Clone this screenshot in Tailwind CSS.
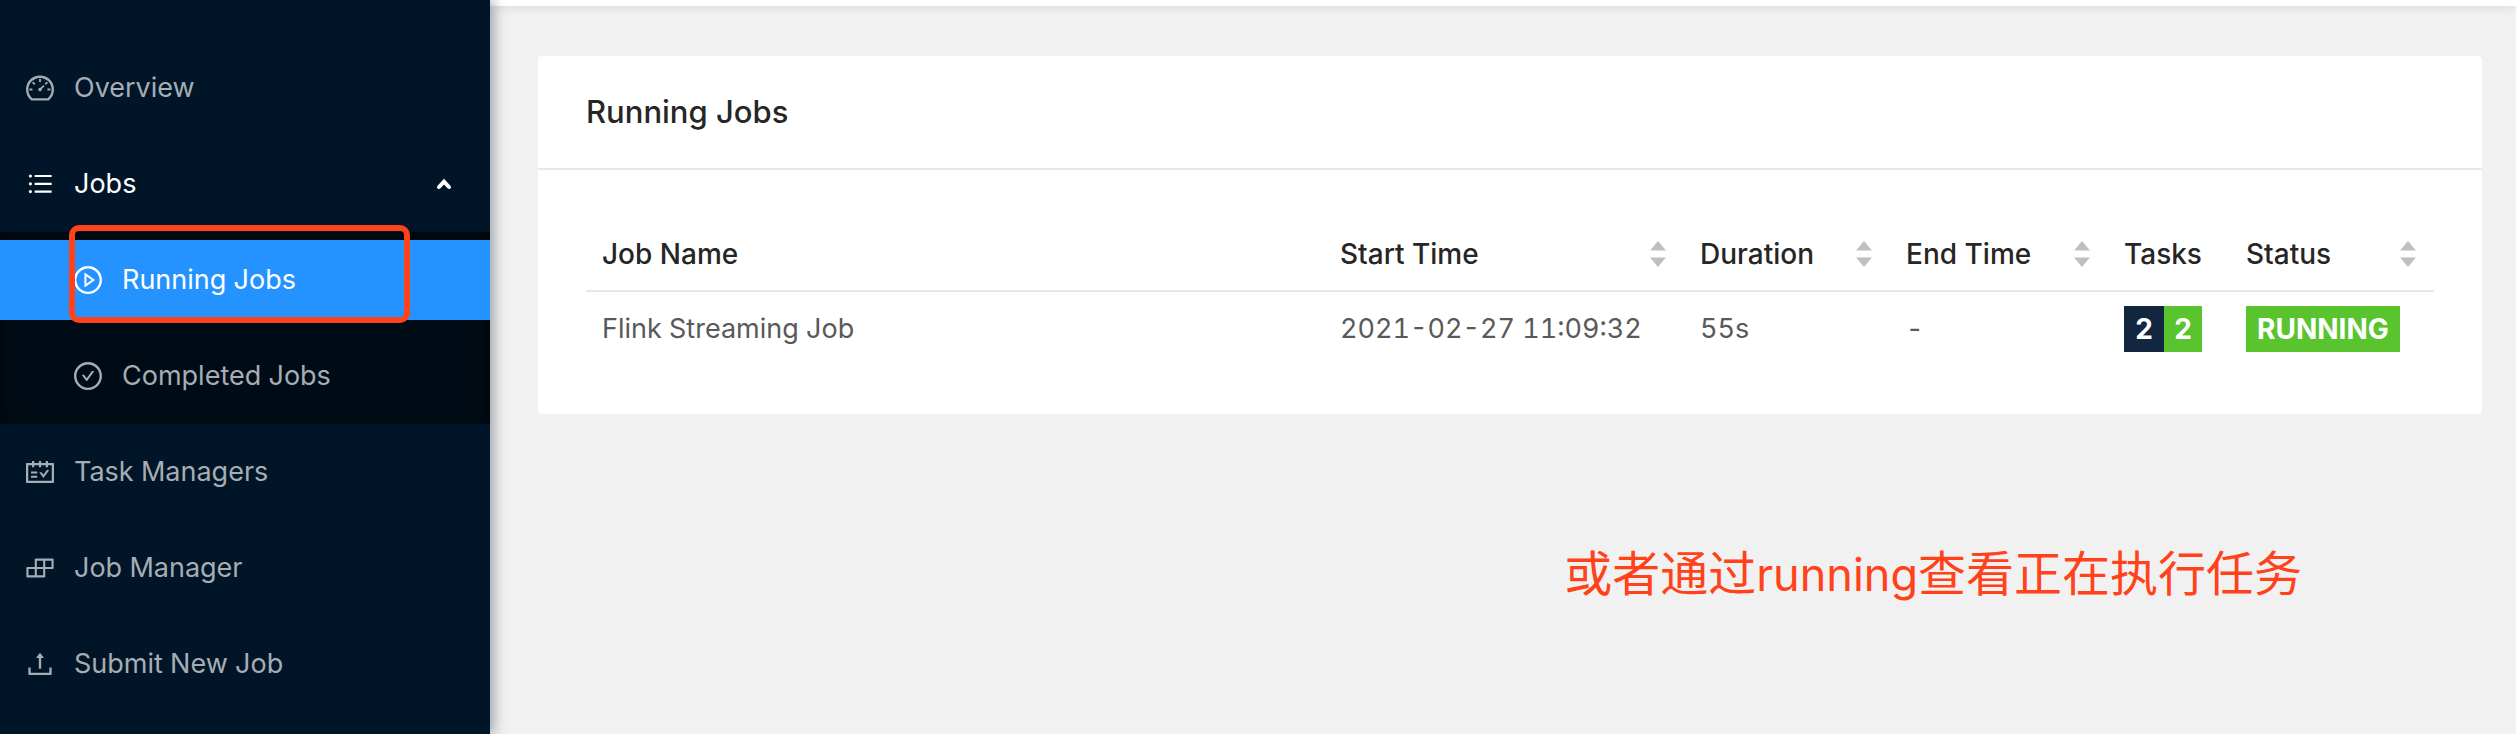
<!DOCTYPE html>
<html lang="en">
<head>
<meta charset="utf-8">
<title>Running Jobs</title>
<script src="https://cdn.jsdelivr.net/npm/@tailwindcss/browser@4"></script>
</head>
<body class="bg-[#f1f1f1] font-['Inter','Noto_Sans_CJK_SC',sans-serif] text-[27px] leading-[42px] text-[#595959] tabular-nums">
<svg class="hidden" aria-hidden="true">
  <symbol id="sorter" viewBox="0 0 16 26"><path d="M8 0L16 9.5H0zM8 26L16 16.5H0z"/></symbol>
</svg>
<div class="flex min-h-screen">
  <aside class="relative z-10 w-[490px] shrink-0 bg-[#001528] text-[#a6adb4] shadow-[4px_0_12px_rgba(0,21,41,0.35)]">
    <nav class="pt-12">
      <a href="#" class="flex h-20 items-center gap-[18px] px-6">
        <svg class="size-8 shrink-0" viewBox="0 0 1024 1024" fill="currentColor" aria-hidden="true"><path d="M924.8 385.6a446.7 446.7 0 0 0-96-142.4 446.7 446.7 0 0 0-142.4-96C631.1 123.8 572.5 112 512 112s-119.1 11.8-174.4 35.2a446.7 446.7 0 0 0-142.4 96 446.7 446.7 0 0 0-96 142.4C75.8 440.9 64 499.5 64 560c0 132.7 58.3 257.7 159.9 343.1l1.7 1.4c5.8 4.8 13.1 7.5 20.6 7.5h531.7c7.5 0 14.8-2.7 20.6-7.5l1.7-1.4C901.7 817.7 960 692.7 960 560c0-60.5-11.9-119.1-35.2-174.4zM761.4 836H262.6A371.12 371.12 0 0 1 140 560c0-99.4 38.7-192.8 109-263 70.3-70.3 163.7-109 263-109 99.4 0 192.8 38.7 263 109 70.3 70.3 109 163.7 109 263 0 105.6-44.5 205.5-122.6 276zM623.5 421.5a8.03 8.03 0 0 0-11.3 0L527.7 506c-18.7-5-39.4-.2-54.1 14.5a55.95 55.95 0 0 0 0 79.2 55.95 55.95 0 0 0 79.2 0 55.87 55.87 0 0 0 14.5-54.1l84.5-84.5c3.1-3.1 3.1-8.2 0-11.3l-28.3-28.3zM490 320h44c4.4 0 8-3.6 8-8v-80c0-4.4-3.6-8-8-8h-44c-4.4 0-8 3.6-8 8v80c0 4.4 3.6 8 8 8zm260 218v44c0 4.4 3.6 8 8 8h80c4.4 0 8-3.6 8-8v-44c0-4.4-3.6-8-8-8h-80c-4.4 0-8 3.6-8 8zm12.7-197.2l-31.1-31.1a8.03 8.03 0 0 0-11.3 0l-56.6 56.6a8.03 8.03 0 0 0 0 11.3l31.1 31.1c3.1 3.1 8.2 3.1 11.3 0l56.6-56.6c3.1-3.1 3.1-8.2 0-11.3zm-458.6-31.1a8.03 8.03 0 0 0-11.3 0l-31.1 31.1a8.03 8.03 0 0 0 0 11.3l56.6 56.6c3.1 3.1 8.2 3.1 11.3 0l31.1-31.1c3.1-3.1 3.1-8.2 0-11.3l-56.6-56.6zM262 530h-80c-4.4 0-8 3.6-8 8v44c0 4.4 3.6 8 8 8h80c4.4 0 8-3.6 8-8v-44c0-4.4-3.6-8-8-8z"/></svg>
        <span>Overview</span>
      </a>
      <button type="button" aria-expanded="true" class="mt-4 mb-2 flex h-20 w-full items-center gap-[18px] px-6 text-left text-white">
        <svg class="size-8 shrink-0" viewBox="0 0 32 32" fill="currentColor" aria-hidden="true"><circle cx="6.4" cy="8" r="1.6"/><circle cx="6.4" cy="15.8" r="1.6"/><circle cx="6.4" cy="23.6" r="1.6"/><path d="M10.6 6.9h17v2.2h-17zM10.6 14.7h17v2.2h-17zM10.6 22.5h17v2.2h-17z"/></svg>
        <span class="grow">Jobs</span>
        <svg class="mr-3 size-5 shrink-0" viewBox="0 0 20 20" fill="none" stroke="currentColor" stroke-width="4" stroke-linecap="round" aria-hidden="true"><path d="M5 13L10 7.7L15 13"/></svg>
      </button>
      <div class="bg-[#000c15] py-2 shadow-[inset_0_4px_16px_rgba(0,0,0,0.45)]">
        <a href="#" aria-current="page" class="relative flex h-20 items-center gap-[18px] bg-[#2492ff] pr-6 pl-18 text-white">
          <svg class="size-8 shrink-0" viewBox="0 0 1024 1024" fill="currentColor" aria-hidden="true"><path d="M512 64C264.6 64 64 264.6 64 512s200.6 448 448 448 448-200.6 448-448S759.4 64 512 64zm0 820c-205.4 0-372-166.6-372-372s166.6-372 372-372 372 166.6 372 372-166.6 372-372 372z"/><path d="M719.4 499.1l-296.1-215A15.9 15.9 0 0 0 398 297v430c0 13.1 14.8 20.5 25.3 12.9l296.1-215a15.9 15.9 0 0 0 0-25.8zm-257.6 134V390.9L628.5 512 461.8 633.1z"/></svg>
          <span>Running Jobs</span>
          <span class="absolute -top-[15px] -bottom-[3px] left-[69px] w-[341px] rounded-[10px] border-6 border-[#ff421a]" aria-hidden="true"></span>
        </a>
        <a href="#" class="mt-4 flex h-20 items-center gap-[18px] pr-6 pl-18">
          <svg class="size-8 shrink-0" viewBox="0 0 1024 1024" fill="currentColor" aria-hidden="true"><path d="M699 353h-46.9c-10.2 0-19.9 4.9-25.9 13.3L469 584.3l-71.2-98.8c-6-8.3-15.6-13.3-25.9-13.3H325c-6.5 0-10.3 7.4-6.5 12.7l124.6 172.8a31.8 31.8 0 0 0 51.7 0l210.6-292c3.9-5.3.1-12.7-6.4-12.7z"/><path d="M512 64C264.6 64 64 264.6 64 512s200.6 448 448 448 448-200.6 448-448S759.4 64 512 64zm0 820c-205.4 0-372-166.6-372-372s166.6-372 372-372 372 166.6 372 372-166.6 372-372 372z"/></svg>
          <span>Completed Jobs</span>
        </a>
      </div>
      <a href="#" class="mt-2 flex h-20 items-center gap-[18px] px-6">
        <svg class="size-8 shrink-0" viewBox="0 0 1024 1024" fill="currentColor" aria-hidden="true"><path d="M928 224H768v-56c0-4.4-3.6-8-8-8h-56c-4.4 0-8 3.6-8 8v56H548v-56c0-4.4-3.6-8-8-8h-56c-4.4 0-8 3.6-8 8v56H328v-56c0-4.4-3.6-8-8-8h-56c-4.4 0-8 3.6-8 8v56H96c-17.7 0-32 14.3-32 32v576c0 17.7 14.3 32 32 32h832c17.7 0 32-14.3 32-32V256c0-17.7-14.3-32-32-32zm-40 568H136V296h120v56c0 4.4 3.6 8 8 8h56c4.4 0 8-3.6 8-8v-56h148v56c0 4.4 3.6 8 8 8h56c4.4 0 8-3.6 8-8v-56h148v56c0 4.4 3.6 8 8 8h56c4.4 0 8-3.6 8-8v-56h120v496zM416 496H232c-4.4 0-8 3.6-8 8v48c0 4.4 3.6 8 8 8h184c4.4 0 8-3.6 8-8v-48c0-4.4-3.6-8-8-8zm0 136H232c-4.4 0-8 3.6-8 8v48c0 4.4 3.6 8 8 8h184c4.4 0 8-3.6 8-8v-48c0-4.4-3.6-8-8-8zm308.2-177.4L620.6 598.3l-52.8-73.1c-3-4.2-7.8-6.6-12.9-6.6H500c-6.5 0-10.3 7.4-6.5 12.7l114.1 158.2a15.9 15.9 0 0 0 25.8 0l165-228.7c3.8-5.3 0-12.7-6.5-12.7H737c-5-.1-9.8 2.4-12.8 6.5z"/></svg>
        <span>Task Managers</span>
      </a>
      <a href="#" class="mt-4 flex h-20 items-center gap-[18px] px-6">
        <svg class="size-8 shrink-0" viewBox="0 0 1024 1024" fill="currentColor" aria-hidden="true"><path d="M916 210H376c-17.7 0-32 14.3-32 32v236H108c-17.7 0-32 14.3-32 32v272c0 17.7 14.3 32 32 32h540c17.7 0 32-14.3 32-32V546h236c17.7 0 32-14.3 32-32V242c0-17.7-14.3-32-32-32zm-504 68h200v200H412V278zm-68 468H144V546h200v200zm268 0H412V546h200v200zm268-268H680V278h200v200z"/></svg>
        <span>Job Manager</span>
      </a>
      <a href="#" class="mt-4 flex h-20 items-center gap-[18px] px-6">
        <svg class="size-8 shrink-0" viewBox="0 0 1024 1024" fill="currentColor" aria-hidden="true"><path d="M400 317.7h73.9V656c0 4.4 3.6 8 8 8h60c4.4 0 8-3.6 8-8V317.7H624c6.7 0 10.4-7.7 6.3-12.9L518.3 163a8 8 0 0 0-12.6 0l-112 141.7c-4.1 5.3-.4 13 6.3 13zM878 626h-60c-4.4 0-8 3.6-8 8v154H214V634c0-4.4-3.6-8-8-8h-60c-4.4 0-8 3.6-8 8v198c0 17.7 14.3 32 32 32h684c17.7 0 32-14.3 32-32V634c0-4.4-3.6-8-8-8z"/></svg>
        <span>Submit New Job</span>
      </a>
    </nav>
  </aside>
  <div class="flex min-w-0 grow flex-col">
    <header class="h-[6px] bg-white shadow-[0_2px_8px_rgba(0,21,41,0.1)]"></header>
    <main class="pt-[50px] pr-[34px] pl-12">
      <section class="rounded-sm bg-white">
        <h1 class="flex h-[114px] items-center border-b-2 border-[#e8e8e8] px-12 text-[31px] leading-12 font-medium text-[#262626]">Running Jobs</h1>
        <div class="p-12">
          <table class="w-full table-fixed border-separate border-spacing-0 text-left">
            <colgroup>
              <col><col class="w-[360px]"><col class="w-[206px]"><col class="w-[218px]"><col class="w-[122px]"><col class="w-[204px]">
            </colgroup>
            <thead class="text-[28px] text-[#262626]">
              <tr class="h-[74px]">
                <th scope="col" class="border-b-2 border-[#e8e8e8] px-4 font-medium">Job Name</th>
                <th scope="col" class="border-b-2 border-[#e8e8e8] px-4 font-medium"><button type="button" class="flex w-full items-center justify-between pr-[2px]">Start Time<svg class="h-[26px] w-4 fill-[#bfbfbf]" aria-hidden="true"><use href="#sorter"/></svg></button></th>
                <th scope="col" class="border-b-2 border-[#e8e8e8] px-4 font-medium"><button type="button" class="flex w-full items-center justify-between pr-[2px]">Duration<svg class="h-[26px] w-4 fill-[#bfbfbf]" aria-hidden="true"><use href="#sorter"/></svg></button></th>
                <th scope="col" class="border-b-2 border-[#e8e8e8] px-4 font-medium"><button type="button" class="flex w-full items-center justify-between pr-[2px]">End Time<svg class="h-[26px] w-4 fill-[#bfbfbf]" aria-hidden="true"><use href="#sorter"/></svg></button></th>
                <th scope="col" class="border-b-2 border-[#e8e8e8] px-4 font-medium">Tasks</th>
                <th scope="col" class="border-b-2 border-[#e8e8e8] px-4 font-medium"><button type="button" class="flex w-full items-center justify-between pr-[2px]">Status<svg class="h-[26px] w-4 fill-[#bfbfbf]" aria-hidden="true"><use href="#sorter"/></svg></button></th>
              </tr>
            </thead>
            <tbody>
              <tr class="h-[74px]">
                <td class="px-4">Flink Streaming Job</td>
                <td class="px-4 whitespace-nowrap">2021-02-27 11:09:32</td>
                <td class="px-4">55s</td>
                <td class="px-4">-</td>
                <td class="px-4"><div class="flex text-[28px] font-bold text-white"><span class="w-10 bg-[#12273f] text-center leading-[46px]">2</span><span class="w-[38px] bg-[#5ac42f] text-center leading-[46px]">2</span></div></td>
                <td class="px-4"><div class="flex text-[28px] font-bold text-white"><span class="bg-[#5ac42f] px-[11px] leading-[46px]">RUNNING</span></div></td>
              </tr>
            </tbody>
          </table>
        </div>
      </section>
      <p lang="zh-CN" class="mt-[124px] pr-[180px] text-right text-[48px] leading-[72px] text-[#ff421a]">或者通过<span class="text-[45px]">running</span>查看正在执行任务</p>
    </main>
  </div>
</div>
</body>
</html>
